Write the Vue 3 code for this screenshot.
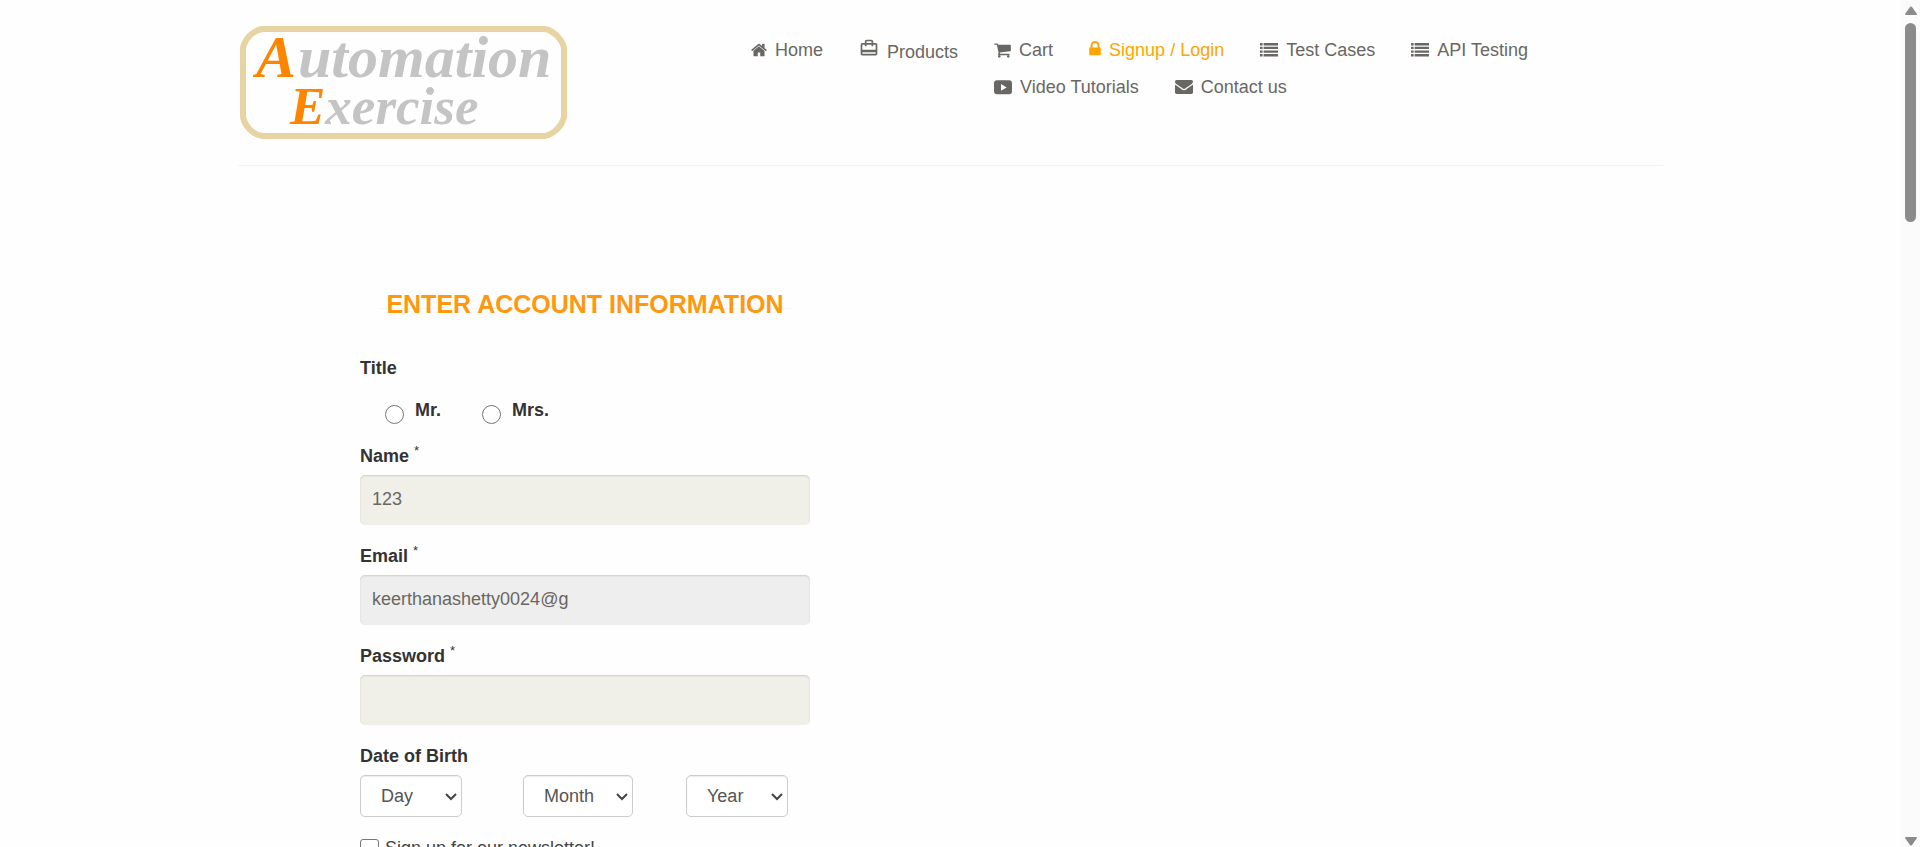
<script setup>
import { ref } from 'vue'

const list = 'M0 260h260v240H0zM360 260h1432v240H360zM0 630h260v240H0zM360 630h1432v240H360zM0 1000h260v240H0zM360 1000h1432v240H360zM0 1370h260v240H0zM360 1370h1432v240H360z'

const links = [
  { text: 'Home', kind: 'w16', box: '64 0 1664 1792', path: 'M1472 992v480q0 26-19 45t-45 19h-384v-384h-256v384h-384q-26 0-45-19t-19-45v-480q0-1 .5-3t.5-3l575-474 575 474q1 2 1 6zm223-69l-62 74q-8 9-21 11h-3q-13 0-21-7l-692-577-692 577q-12 8-24 7-13-2-21-11l-62-74q-8-10-7-23.5t11-21.5l719-599q32-26 76-26t76 26l244 204v-195q0-14 9-23t23-9h192q14 0 23 9t9 23v408l219 182q10 8 11 21.5t-7 23.5z' },
  { text: 'Products', kind: 'travel', box: '0 0 24 24', path: 'M20 6h-3V4c0-1.11-.89-2-2-2H9c-1.11 0-2 .89-2 2v2H4c-1.11 0-2 .89-2 2v11c0 1.11.89 2 2 2h16c1.11 0 2-.89 2-2V8c0-1.11-.89-2-2-2zM9 4h6v2H9V4zm11 15H4v-2h16v2zm0-5H4V8h3v2h2V8h6v2h2V8h3v6z' },
  { text: 'Cart', kind: 'w17', box: '64 0 1664 1792', path: 'M704 1536q0 52-38 90t-90 38-90-38-38-90 38-90 90-38 90 38 38 90zm896 0q0 52-38 90t-90 38-90-38-38-90 38-90 90-38 90 38 38 90zm128-1088v512q0 24-16.5 42.5t-40.5 21.5l-1044 122q13 60 13 70 0 16-24 64h920q26 0 45 19t19 45-19 45-45 19h-1024q-26 0-45-19t-19-45q0-11 8-31.5t16-36 21.5-40 15.5-29.5l-177-823h-204q-26 0-45-19t-19-45 19-45 45-19h256q16 0 28.5 6.5t19.5 15.5 13 24.5 8 26 5.5 29.5 4.5 26h1201q26 0 45 19t19 45z' },
  { text: 'Signup / Login', kind: 'w12', active: true, box: '320 128 1152 1792', path: 'M640 768h512v-192q0-106-75-181t-181-75-181 75-75 181v192zm832 96v576q0 40-28 68t-68 28h-960q-40 0-68-28t-28-68v-576q0-40 28-68t68-28h32v-192q0-184 132-316t316-132 316 132 132 316v192h32q40 0 68 28t28 68z' },
  { text: 'Test Cases', kind: 'w18', box: '0 64 1792 1792', path: list },
  { text: 'API Testing', kind: 'w18', box: '0 64 1792 1792', path: list },
  { text: 'Video Tutorials', kind: 'w18', box: '0 64 1792 1792', path: 'M300 300h1192q300 0 300 300v784q0 300-300 300H300q-300 0-300-300V600q0-300 300-300zM700 660v680l560-340z' },
  { text: 'Contact us', kind: 'w18', box: '0 64 1792 1792', path: 'M1792 710v794q0 66-47 113t-113 47h-1472q-66 0-113-47t-47-113v-794q44 49 101 87 362 246 497 345 57 42 92.5 65.5t94.5 48 110 24.5h2q51 0 110-24.5t94.5-48 92.5-65.5q170-123 498-345 57-39 100-87zm0-294q0 79-49 151t-122 123q-376 261-468 325-10 7-42.5 31t-54 38.5-52 32.5-57.5 27-50 9h-2q-23 0-50-9t-57.5-27-52-32.5-54-38.5-42.5-31q-91-64-262-182.5t-205-142.5q-62-42-117-115.5t-55-136.5q0-78 41.5-130t118.5-52h1472q65 0 112.5 47t47.5 113z' }
]

const title = ref('')
const name = ref('123')
const email = ref('keerthanashetty0024@g')
const password = ref('')
const newsletter = ref(false)
const dates = ['Day', 'Month', 'Year']
</script>

<template>
  <div class="page">
    <div class="content">
      <header class="header">
        <a href="#" class="logo" aria-label="Automation Exercise">
          <svg viewBox="0 0 327 113" role="img">
            <path d="M22 3H305C314 5 322 13 324 22V91C322 100 314 108 305 110H22C12 108 5 100 3 91V22C5 13 12 5 22 3Z" />
            <text x="16" y="51" class="line-one"><tspan class="initial">A</tspan><tspan x="58">utomation</tspan></text>
            <text x="50" y="98" class="line-two"><tspan class="initial">E</tspan>xercise</text>
          </svg>
        </a>
        <nav class="nav">
          <ul>
            <li v-for="link in links" :key="link.text" :class="{ tall: link.kind === 'travel' }">
              <a href="#" :class="{ active: link.active }">
                <svg :class="link.kind" :viewBox="link.box" aria-hidden="true"><path :d="link.path" fill-rule="evenodd" /></svg>
                <span>{{ link.text }}</span>
              </a>
            </li>
          </ul>
        </nav>
      </header>

      <main class="account">
        <h2><span>Enter Account Information</span></h2>
        <form @submit.prevent>
          <div id="title-label" class="label">Title</div>
          <div class="radios" role="radiogroup" aria-labelledby="title-label">
            <label><input v-model="title" type="radio" name="title" value="Mr"><span>Mr.</span></label>
            <label><input v-model="title" type="radio" name="title" value="Mrs"><span>Mrs.</span></label>
          </div>
          <div class="field">
            <label for="name" class="label">Name <sup>*</sup></label>
            <input id="name" v-model="name" type="text">
          </div>
          <div class="field">
            <label for="email" class="label">Email <sup>*</sup></label>
            <input id="email" v-model="email" type="text" disabled>
          </div>
          <div class="field">
            <label for="password" class="label">Password <sup>*</sup></label>
            <input id="password" v-model="password" type="password">
          </div>
          <div id="birth-label" class="label">Date of Birth</div>
          <div class="dates" role="group" aria-labelledby="birth-label">
            <div v-for="part in dates" :key="part" class="date">
              <div class="select">
                <select :aria-label="part"><option>{{ part }}</option></select>
                <svg viewBox="0 0 12 8" aria-hidden="true"><path d="M1 1l5 5 5-5" /></svg>
              </div>
            </div>
          </div>
          <label class="check"><input v-model="newsletter" type="checkbox"><span>Sign up for our newsletter!</span></label>
        </form>
      </main>
    </div>
    <div class="scrollbar" aria-hidden="true">
      <svg viewBox="0 0 12 10"><path d="M5 1Q6 0 7 1L12 8Q12 9 11 9H1Q0 9 0 8Z" /></svg>
      <div class="track"><div class="thumb"></div></div>
      <svg viewBox="0 0 12 10"><path d="M5 9Q6 10 7 9L12 2Q12 1 11 1H1Q0 1 0 2Z" /></svg>
    </div>
  </div>
</template>

<style>
body {
  margin: 0;
  background: #fefefe;
}
</style>

<style scoped>
* {
  box-sizing: border-box;
}
.page {
  display: flex;
  height: 100vh;
  overflow: hidden;
  font-family: Arial, "Liberation Sans", sans-serif;
  font-size: 18px;
  line-height: 25px;
  color: #696763;
}
.content {
  flex: 1;
  min-width: 0;
  padding: 0 16px;
}
.header {
  display: flex;
  justify-content: space-between;
  max-width: 1425px;
  margin: 0 auto;
  padding: 26px 0;
  border-bottom: 1px solid #f3f3f3;
}
.logo {
  padding-left: 2px;
}
.logo svg {
  display: block;
  width: 327px;
  height: 113px;
}
.logo path {
  fill: none;
  stroke: #e8d3a3;
  stroke-width: 6;
}
.logo text {
  fill: #c4c4c4;
  font-family: "Liberation Serif", serif;
  font-style: italic;
  font-weight: 700;
}
.logo .initial {
  fill: #ff8400;
}
.line-one {
  font-size: 60px;
}
.line-two {
  font-size: 53px;
}
.nav {
  width: 64%;
  padding-top: 12px;
}
.nav ul {
  margin: 0;
  padding: 0;
  list-style: none;
}
.nav li {
  float: left;
  padding: 0 36px 12px 0;
}
.nav a {
  display: flex;
  align-items: center;
  gap: 8px;
  color: #696763;
  text-decoration: none;
  white-space: nowrap;
}
.nav a.active {
  color: orange;
}
.nav .tall a {
  align-items: flex-start;
  line-height: 29px;
}
.nav svg {
  height: 18px;
  margin-bottom: 2px;
  fill: currentColor;
}
.nav .w12 { width: 12px; }
.nav .w16 { width: 16px; }
.nav .w17 { width: 17px; }
.nav .w18 { width: 18px; }
.nav .travel {
  width: 20px;
  height: 20px;
}
.account {
  max-width: 1425px;
  margin: 0 auto;
  padding: 124px 0 0 122px;
}
.account h2 {
  position: relative;
  width: 412px;
  margin: 0 0 38px 19px;
  font-size: 25px;
  line-height: 28px;
  text-align: center;
  text-transform: uppercase;
  color: #fe980f;
}
.account h2::before {
  content: "";
  position: absolute;
  top: 18px;
  left: 0;
  right: 0;
  height: 1px;
  background: #f5f5f5;
}
.account h2 span {
  position: relative;
}
form {
  max-width: 450px;
}
.label {
  display: block;
  font-weight: 700;
  color: #333;
}
sup {
  font-size: 13px;
  line-height: 0;
  font-weight: 400;
}
.radios {
  display: flex;
  gap: 41px;
  padding: 18px 0 20px 25px;
}
.radios label {
  display: flex;
  align-items: flex-end;
  gap: 11px;
  font-weight: 700;
  color: #333;
}
.radios span {
  padding-bottom: 2px;
  line-height: 23px;
}
input[type="radio"],
input[type="checkbox"] {
  appearance: none;
  width: 19px;
  height: 19px;
  margin: 0;
  border: 1px solid #767676;
  background: #fff;
}
input[type="radio"] {
  border-radius: 50%;
}
input[type="radio"]:checked {
  background: #696763;
}
input[type="checkbox"] {
  border-radius: 3px;
}
input[type="checkbox"]:checked {
  background: #696763;
}
.field {
  margin-bottom: 19px;
}
.field input {
  display: block;
  width: 100%;
  height: 50px;
  margin-top: 6px;
  padding: 0 12px 2px;
  border: 0;
  border-radius: 5px;
  background: #f0f0e9;
  box-shadow: inset 0 1px 2px rgba(0, 0, 0, 0.14);
  font: inherit;
  color: #696763;
}
.field input:disabled {
  background: #eee;
}
.dates {
  display: grid;
  grid-template-columns: repeat(3, 163px);
  margin: 6px 0 20px;
}
.select {
  position: relative;
  width: 102px;
}
.date:nth-child(2) .select {
  width: 110px;
}
select {
  appearance: none;
  display: block;
  width: 100%;
  height: 42px;
  padding: 0 24px 0 20px;
  border: 1px solid #ccc;
  border-radius: 5px;
  background: #fff;
  box-shadow: inset 0 1px 1px rgba(0, 0, 0, 0.08);
  font: inherit;
  color: #555;
}
.select svg {
  position: absolute;
  top: 18px;
  right: 5px;
  width: 12px;
  height: 8px;
  fill: none;
  stroke: #444;
  stroke-width: 2;
  pointer-events: none;
}
.check {
  display: flex;
  align-items: center;
  gap: 6px;
  line-height: 23px;
  color: #444;
}
.scrollbar {
  display: flex;
  flex-direction: column;
  align-items: center;
  width: 19px;
  padding: 6px 0 1px;
  background: #fbfbfb;
}
.scrollbar svg {
  width: 12px;
  height: 10px;
  fill: #8b8b8b;
}
.track {
  flex: 1;
  padding-top: 7px;
}
.thumb {
  width: 11px;
  height: 199px;
  border-radius: 6px;
  background: #8b8b8b;
}
</style>
